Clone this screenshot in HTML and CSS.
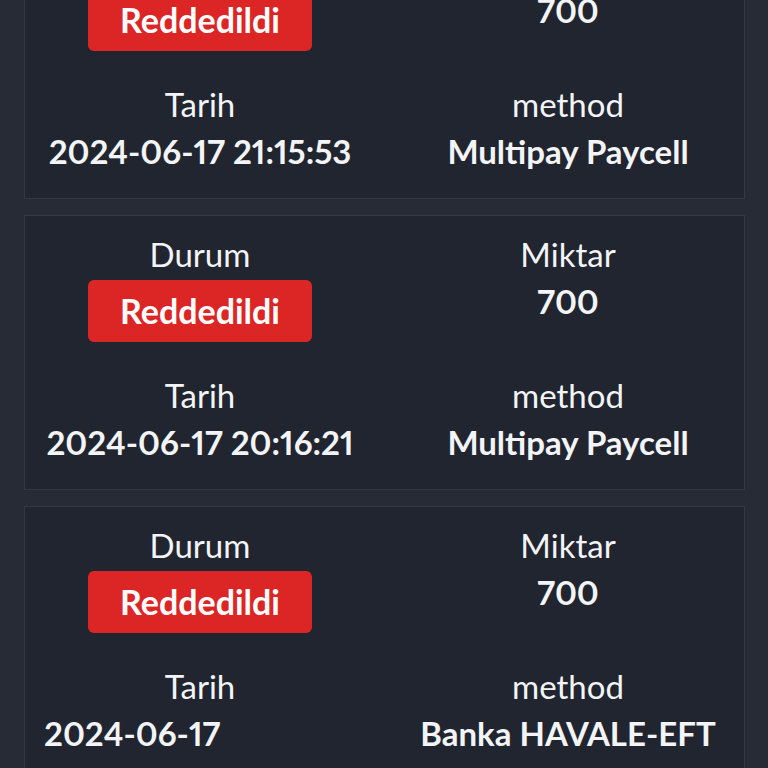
FILE: index.html
```html
<!DOCTYPE html>
<html lang="tr">
<head>
<meta charset="utf-8">
<title>İşlemler</title>
<link rel="stylesheet" href="styles.css">
</head>
<body>
<main class="list">
  <section class="card card-first">
    <div class="grid">
      <div class="cell">
        <div class="label">Durum</div>
        <div class="badge">Reddedildi</div>
      </div>
      <div class="cell">
        <div class="label">Miktar</div>
        <div class="value">700</div>
      </div>
      <div class="cell">
        <div class="label">Tarih</div>
        <div class="value">2024-06-17 21:15:53</div>
      </div>
      <div class="cell">
        <div class="label">method</div>
        <div class="value">Multipay Paycell</div>
      </div>
    </div>
  </section>
  <section class="card">
    <div class="grid">
      <div class="cell">
        <div class="label">Durum</div>
        <div class="badge">Reddedildi</div>
      </div>
      <div class="cell">
        <div class="label">Miktar</div>
        <div class="value">700</div>
      </div>
      <div class="cell">
        <div class="label">Tarih</div>
        <div class="value">2024-06-17 20:16:21</div>
      </div>
      <div class="cell">
        <div class="label">method</div>
        <div class="value">Multipay Paycell</div>
      </div>
    </div>
  </section>
  <section class="card">
    <div class="grid">
      <div class="cell">
        <div class="label">Durum</div>
        <div class="badge">Reddedildi</div>
      </div>
      <div class="cell">
        <div class="label">Miktar</div>
        <div class="value">700</div>
      </div>
      <div class="cell">
        <div class="label">Tarih</div>
        <div class="value">2024-06-17 19:48:07.000000</div>
      </div>
      <div class="cell">
        <div class="label">method</div>
        <div class="value">Banka HAVALE-EFT</div>
      </div>
    </div>
  </section>
</main>
</body>
</html>
```
FILE: styles.css
```css
html, body {
  margin: 0;
  padding: 0;
  background: #272b36;
  height: 768px;
  overflow: hidden;
}
body {
  font-family: Lato, "Noto Sans", sans-serif;
  color: #f3f4f6;
  font-variant-numeric: proportional-nums;
}
.list {
  padding: 0 23px 0 24px;
  display: flex;
  flex-direction: column;
  gap: 16px;
}
.card {
  background: #212530;
  border: 1px solid #343845;
  padding: 12px 20px 23px 19px;
}
.card-first {
  margin-top: -76px;
}
.grid {
  display: grid;
  grid-template-columns: 1fr 1fr;
  column-gap: 56px;
  row-gap: 27px;
}
.cell {
  display: flex;
  flex-direction: column;
  align-items: center;
  text-align: center;
  min-width: 0;
}
.label {
  font-size: 33px;
  line-height: 52px;
  font-weight: 400;
}
.value {
  font-size: 33px;
  line-height: 48px;
  margin-top: -3px;
  font-weight: 700;
  text-align: left;
  max-width: 100%;
}
.badge {
  background: #dc2626;
  color: #ffffff;
  font-size: 34px;
  line-height: 62px;
  font-weight: 700;
  padding: 0 32px;
  border-radius: 6px;
}
```
